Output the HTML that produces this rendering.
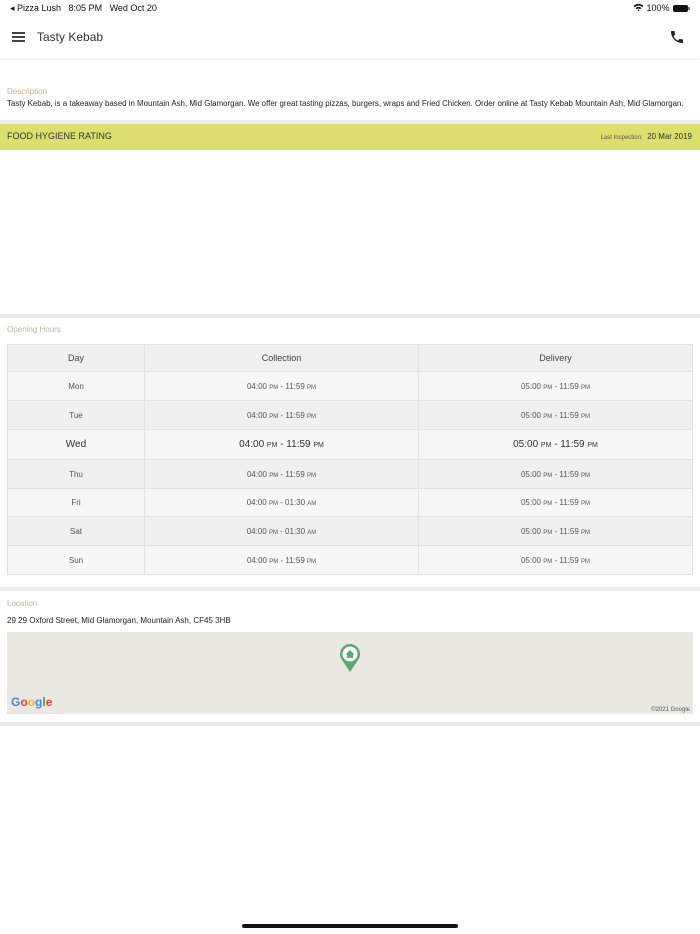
<!DOCTYPE html>
<html><head><style>
*{margin:0;padding:0;box-sizing:border-box}
body{width:700px;height:934px;background:#fff;font-family:"Liberation Sans",sans-serif;position:relative;overflow:hidden;color:#222}
.a{position:absolute}
.lbl{color:#c2b594;font-size:8px}
table{border-collapse:collapse;position:absolute;left:7px;top:344px;width:686px;font-size:8px;color:#555}
td{border:1px solid #e2e2e2;text-align:center}
.s{font-size:6px}
</style></head><body>
<div class="a" style="left:10px;top:3px;font-size:9px;color:#111">◂ Pizza Lush&nbsp;&nbsp;&nbsp;8:05 PM&nbsp;&nbsp;&nbsp;Wed Oct 20</div>
<div class="a" style="left:633px;top:3px;font-size:9px;color:#111">
<svg width="11" height="9" viewBox="0 0 11 9" style="vertical-align:-1px"><path d="M0.5 3 A7 7 0 0 1 10.5 3 L9.3 4.2 A5.3 5.3 0 0 0 1.7 4.2Z M2.6 5.1 A4 4 0 0 1 8.4 5.1 L7.2 6.3 A2.3 2.3 0 0 0 3.8 6.3Z M4.5 7.2 A1.2 1.2 0 0 1 6.5 7.2 L5.5 8.3Z" fill="#111"/></svg> 100%</div>
<div class="a" style="left:673px;top:5px;width:15px;height:7px;background:#111;border-radius:2px"></div>
<div class="a" style="left:688px;top:7px;width:1.5px;height:3px;background:#777"></div>
<div class="a" style="left:0;top:20px;width:700px;height:38px;background:#fff;box-shadow:0 2px 3px rgba(0,0,0,.07)"></div>
<div class="a" style="left:12px;top:32px;width:13px;height:1.5px;background:#444;box-shadow:0 4px 0 #444,0 8px 0 #444"></div>
<div class="a" style="left:37px;top:30px;font-size:12px;color:#333">Tasty Kebab</div>
<svg class="a" style="left:669px;top:29px" width="16" height="16" viewBox="0 0 24 24"><path d="M6.6 10.8c1.4 2.8 3.8 5.1 6.6 6.6l2.2-2.2c.3-.3.7-.4 1-.2 1.1.4 2.3.6 3.6.6.6 0 1 .4 1 1V20c0 .6-.4 1-1 1C10.6 21 3 13.4 3 4c0-.6.4-1 1-1h3.5c.6 0 1 .4 1 1 0 1.3.2 2.5.6 3.6.1.3 0 .7-.2 1z" fill="#222"/></svg>
<div class="a lbl" style="left:7px;top:87px">Description</div>
<div class="a" style="left:7px;top:99px;font-size:8px;white-space:nowrap;transform:scaleX(0.988);transform-origin:0 0">Tasty Kebab, is a takeaway based in Mountain Ash, Mid Glamorgan. We offer great tasting pizzas, burgers, wraps and Fried Chicken. Order online at Tasty Kebab Mountain Ash, Mid Glamorgan.</div>
<div class="a" style="left:0;top:120px;width:700px;height:4px;background:#ececec"></div>
<div class="a" style="left:0;top:124px;width:700px;height:26px;background:#dcdf6e"></div>
<div class="a" style="left:7px;top:131px;font-size:9px;color:#333">FOOD HYGIENE RATING</div>
<div class="a" style="right:8px;top:132px;font-size:8px;color:#333;white-space:nowrap"><span style="font-size:6px;color:#555">Last Inspection:</span>&nbsp; 20 Mar 2019</div>
<div class="a" style="left:0;top:314px;width:700px;height:4px;background:#ececec"></div>
<div class="a lbl" style="left:7px;top:325px">Opening Hours</div>
<table>
<tr style="height:27px;background:#f0f0f0;font-size:9px;color:#444"><td style="width:137px">Day</td><td style="width:274px">Collection</td><td>Delivery</td></tr>
<tr style="height:29px;background:#f7f7f7"><td>Mon</td><td>04:00 <span class="s">PM</span> - 11:59 <span class="s">PM</span></td><td>05:00 <span class="s">PM</span> - 11:59 <span class="s">PM</span></td></tr>
<tr style="height:29px;background:#f0f0f0"><td>Tue</td><td>04:00 <span class="s">PM</span> - 11:59 <span class="s">PM</span></td><td>05:00 <span class="s">PM</span> - 11:59 <span class="s">PM</span></td></tr>
<tr style="height:30px;background:#f7f7f7;font-size:10px;color:#333"><td>Wed</td><td>04:00 <span style="font-size:7px">PM</span> - 11:59 <span style="font-size:7px">PM</span></td><td>05:00 <span style="font-size:7px">PM</span> - 11:59 <span style="font-size:7px">PM</span></td></tr>
<tr style="height:29px;background:#f0f0f0"><td>Thu</td><td>04:00 <span class="s">PM</span> - 11:59 <span class="s">PM</span></td><td>05:00 <span class="s">PM</span> - 11:59 <span class="s">PM</span></td></tr>
<tr style="height:28px;background:#f7f7f7"><td>Fri</td><td>04:00 <span class="s">PM</span> - 01:30 <span class="s">AM</span></td><td>05:00 <span class="s">PM</span> - 11:59 <span class="s">PM</span></td></tr>
<tr style="height:29px;background:#f0f0f0"><td>Sat</td><td>04:00 <span class="s">PM</span> - 01:30 <span class="s">AM</span></td><td>05:00 <span class="s">PM</span> - 11:59 <span class="s">PM</span></td></tr>
<tr style="height:29px;background:#f7f7f7"><td>Sun</td><td>04:00 <span class="s">PM</span> - 11:59 <span class="s">PM</span></td><td>05:00 <span class="s">PM</span> - 11:59 <span class="s">PM</span></td></tr>
</table>
<div class="a" style="left:0;top:587px;width:700px;height:4px;background:#ececec"></div>
<div class="a lbl" style="left:7px;top:599px">Location</div>
<div class="a" style="left:7px;top:616px;font-size:8px">29 29 Oxford Street, Mid Glamorgan, Mountain Ash, CF45 3HB</div>
<div class="a" style="left:7px;top:632px;width:686px;height:82px;background:#ebe8e1"></div>
<svg class="a" style="left:339px;top:643px" width="22" height="30" viewBox="0 0 22 30"><path d="M11 29 L3 17 A10 10 0 1 1 19 17Z" fill="#5aa872"/><circle cx="11" cy="11" r="7.5" fill="#fff"/><path d="M6.5 11.5 L11 7 L15.5 11.5 L14 11.5 L14 15 L8 15 L8 11.5Z" fill="#5aa872"/></svg>
<div class="a" style="left:11px;top:695px;font-size:12px;font-weight:bold"><span style="color:#4285f4">G</span><span style="color:#ea4335">o</span><span style="color:#fbbc05">o</span><span style="color:#4285f4">g</span><span style="color:#34a853">l</span><span style="color:#ea4335">e</span></div>
<div class="a" style="right:10px;top:707px;font-size:6px;color:#555">©2021 Google</div>
<div class="a" style="left:0;top:722px;width:700px;height:4px;background:#ececec"></div>
<div class="a" style="left:242px;top:924px;width:216px;height:4px;border-radius:2px;background:#111"></div>
</body></html>
